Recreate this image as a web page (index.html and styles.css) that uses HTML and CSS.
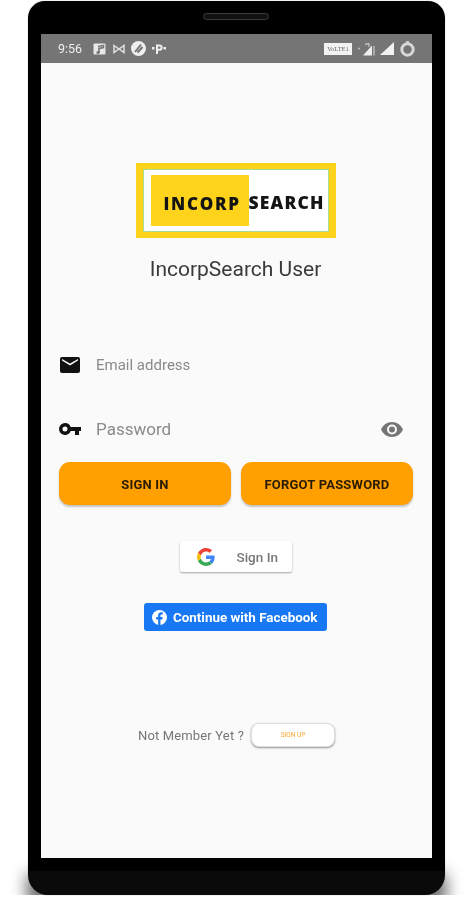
FILE: index.html
```html
<!DOCTYPE html>
<html lang="en">
<head>
<meta charset="utf-8">
<title>IncorpSearch User</title>
<link rel="stylesheet" href="styles.css">
</head>
<body>
<div class="device">
  <div class="drop-shadow"></div>
  <div class="phone">
    <div class="speaker"></div>
    <div class="screen">
      <div class="statusbar">
        <div class="status-left">
          <span class="time">9:56</span>
          <svg class="st-music" width="13" height="12" viewBox="0 0 13 12"><rect x="0.500" y="0.500" width="12" height="11" rx="1" fill="#e8e8e8"/><path d="M6 10V5.500L10.500 4.500V2.500L5 3.500" fill="none" stroke="#757575" stroke-width="1.600"/><circle cx="5" cy="9.500" r="1.600" fill="#757575"/></svg>
          <svg class="st-mail" width="12" height="10" viewBox="0 0 12 10"><path d="M1 1.500L6 5L11 1.500V8.500L6 5L1 8.500Z" fill="none" stroke="#e0e0e0" stroke-width="1.500"/></svg>
          <svg class="st-circle" width="15" height="15" viewBox="0 0 15 15"><circle cx="7.500" cy="7.500" r="7.500" fill="#eee"/><path d="M4 11L10 3.500M6.500 11.500L11.500 6" stroke="#757575" stroke-width="2"/></svg>
          <svg class="st-p" width="14" height="10" viewBox="0 0 14 10"><rect x="0" y="3" width="2.500" height="2.500" fill="#eee"/><rect x="11.500" y="3" width="2.500" height="2.500" fill="#eee"/><path d="M5 10V1.500H7.500A2 2 0 0 1 7.500 5.800H5" fill="none" stroke="#eee" stroke-width="2"/></svg>
        </div>
        <div class="status-right">
          <span class="volte">VoLTE1</span>
          <svg class="st-sim" width="19" height="14" viewBox="0 0 19 14"><path d="M5 13.500L14 3.500V13.500Z" fill="#eee"/><path d="M16 4V13.500M7 2.500L11 1.500M11 1V5M0 6.500H2" stroke="#bbb" stroke-width="1.500" fill="none"/></svg>
          <svg class="st-signal" width="14" height="13" viewBox="0 0 14 13"><path d="M0 13L14 0V13Z" fill="#f2f2f2"/></svg>
          <svg class="st-battery" width="15" height="16" viewBox="0 0 15 16"><circle cx="7.500" cy="8.500" r="5.700" fill="none" stroke="#d8d8d8" stroke-width="3"/><rect x="6" y="0" width="3" height="2" fill="#ccc"/></svg>
        </div>
      </div>
      <main class="content">
        <div class="logo">
          <div class="logo-inner">
            <div class="logo-block"><span class="logo-word1">INCORP</span></div>
            <span class="logo-word2">SEARCH</span>
          </div>
        </div>
        <h1 class="app-title">IncorpSearch User</h1>
        <div class="field field-email">
          <svg class="field-icon" width="20" height="16" viewBox="0 0 20 16"><path d="M2 0H18A2 2 0 0 1 20 2V14A2 2 0 0 1 18 16H2A2 2 0 0 1 0 14V2A2 2 0 0 1 2 0ZM2 3.500L10 8.500L18 3.500L18 2L10 6.500L2 2Z" fill="#111" fill-rule="evenodd"/></svg>
          <span class="placeholder">Email address</span>
        </div>
        <div class="field field-pass">
          <svg class="field-icon" width="22" height="12" viewBox="0 0 22 12"><path d="M6 0A6 6 0 0 1 11.700 4H22V8H20V12H16V8H11.700A6 6 0 1 1 6 0ZM6 3.500A2.500 2.500 0 1 0 6 8.500A2.500 2.500 0 1 0 6 3.500Z" fill="#111" fill-rule="evenodd"/></svg>
          <span class="placeholder placeholder-lg">Password</span>
          <svg class="eye" width="22" height="15" viewBox="0 0 22 15"><path d="M11 0C16 0 20 3 22 7.500C20 12 16 15 11 15C6 15 2 12 0 7.500C2 3 6 0 11 0ZM11 2.500A5 5 0 1 0 11 12.500A5 5 0 1 0 11 2.500ZM11 4.500A3 3 0 1 1 11 10.500A3 3 0 1 1 11 4.500Z" fill="#757575" fill-rule="evenodd"/></svg>
        </div>
        <div class="actions">
          <button class="btn-primary">SIGN IN</button>
          <button class="btn-primary">FORGOT PASSWORD</button>
        </div>
        <button class="btn-google">
          <svg width="18" height="18" viewBox="0 0 48 48"><path fill="#EA4335" d="M24 9.500c3.500 0 6.700 1.200 9.200 3.600l6.900-6.900C35.900 2.400 30.500 0 24 0 14.600 0 6.500 5.400 2.600 13.200l8 6.200C12.500 13.600 17.800 9.500 24 9.500z"/><path fill="#4285F4" d="M47 24.500c0-1.600-.2-3.100-.4-4.500H24v9h12.900c-.6 3-2.200 5.500-4.700 7.200l7.700 6c4.500-4.200 7.100-10.300 7.100-17.700z"/><path fill="#FBBC05" d="M10.500 28.600c-.5-1.400-.8-3-.8-4.600s.3-3.200.8-4.600l-8-6.200C.9 16.500 0 20.100 0 24s.9 7.500 2.600 10.800l7.900-6.200z"/><path fill="#34A853" d="M24 48c6.500 0 11.900-2.100 15.900-5.800l-7.700-6c-2.100 1.400-4.900 2.300-8.200 2.300-6.200 0-11.500-4.200-13.400-9.900l-8 6.200C6.500 42.600 14.600 48 24 48z"/></svg>
          <span>Sign In</span>
        </button>
        <button class="btn-facebook">
          <svg width="15" height="15" viewBox="0 0 16 16"><circle cx="8" cy="8" r="8" fill="#fff"/><path d="M9 16V10H11L11.400 7.500H9V6C9 5.200 9.400 4.700 10.300 4.700H11.500V2.600C11 2.500 10.400 2.400 9.800 2.400C7.900 2.400 6.600 3.600 6.600 5.700V7.500H4.500V10H6.600V16Z" fill="#1877f2"/></svg>
          <span>Continue with Facebook</span>
        </button>
        <div class="signup-row">
          <span class="signup-text">Not Member Yet ?</span>
          <button class="btn-signup">SIGN UP</button>
        </div>
      </main>
    </div>
  </div>
</div>
</body>
</html>
```

FILE: styles.css
```css
* { box-sizing: border-box; }
html, body { margin: 0; padding: 0; }
body {
  width: 471px;
  height: 900px;
  background: #fff;
  overflow: hidden;
  font-family: Roboto, "Liberation Sans", sans-serif;
}
button { font-family: inherit; border: 0; padding: 0; }
.device {
  position: relative;
  width: 417px;
  height: 895px;
  margin-left: 28px;
  padding-top: 1px;
}
.drop-shadow {
  position: absolute;
  left: -1px;
  right: -1px;
  top: 874px;
  height: 30px;
  background: rgba(0,0,0,.6);
  filter: blur(8px);
  clip-path: inset(-30px -30px 9px -30px);
}
.phone {
  width: 417px;
  height: 894px;
  padding: 33px 13px 0;
  background: linear-gradient(#000 870px, #0a0a0a 870px);
  border-radius: 17px 17px 20px 20px;
  box-shadow: 0 0 1px #777;
  position: relative;
  filter: blur(.45px);
}
.speaker {
  position: absolute;
  left: 175px;
  top: 12px;
  width: 66px;
  height: 7px;
  border-radius: 4px;
  background: #111;
  border: 1px solid #3c3c3c;
}
.screen {
  width: 391px;
  height: 824px;
  background: #fafafa;
  display: flex;
  flex-direction: column;
}
.statusbar {
  height: 29px;
  background: #757575;
  display: flex;
  justify-content: space-between;
  align-items: center;
  padding: 0 17px;
  color: #eee;
}
.status-left, .status-right { display: flex; align-items: center; }
.time { font-size: 12.500px; width: 35px; }
.st-mail { margin-left: 7px; }
.st-circle { margin-left: 6px; }
.st-p { margin-left: 6px; }
.volte {
  background: #f2f2f2;
  color: #666;
  font: 6.500px "Liberation Serif", serif;
  width: 28px;
  height: 12px;
  line-height: 12px;
  text-align: center;
}
.st-sim { margin-left: 6px; }
.st-signal { margin-left: 3px; }
.st-battery { margin-left: 6px; }
.content {
  flex: 1;
  display: flex;
  flex-direction: column;
  align-items: center;
  padding: 100px 2px 0 0;
}
.logo {
  width: 200px;
  height: 75px;
  background: #fdd31c;
  padding: 6px 7px;
}
.logo-inner {
  height: 63px;
  background: #fff;
  border: 1px solid #a6dc95;
  display: flex;
  align-items: center;
  padding-left: 7px;
}
.logo-block {
  width: 98px;
  height: 51px;
  background: #fdd31c;
  display: flex;
  align-items: center;
  padding: 5px 0 0 13px;
  white-space: nowrap;
}
.logo-word1, .logo-word2 {
  font-family: "Open Sans", "Liberation Sans", sans-serif;
  font-weight: 800;
  color: #141414;
  line-height: 1;
}
.logo-word1 { font-size: 17px; letter-spacing: 1.700px; }
.logo-word2 { font-size: 17.500px; letter-spacing: 1.200px; padding-top: 5px; }
.app-title {
  margin: 18px 0 0;
  font-size: 21px;
  font-weight: 400;
  line-height: 26px;
  color: #3a3a3a;
}
.field {
  align-self: stretch;
  display: flex;
  align-items: center;
  height: 24px;
  padding-left: 18px;
}
.field-email { margin-top: 71px; }
.field-pass { margin-top: 40px; }
.field-icon { flex: none; }
.field-email .field-icon { margin-left: 1px; }
.field-email .placeholder { margin-left: 16px; }
.field-pass .placeholder { margin-left: 15px; }
.placeholder { font-size: 15px; color: #8a8a8a; }
.placeholder-lg { font-size: 17px; }
.eye { margin-left: auto; margin-right: 27px; }
.actions {
  align-self: stretch;
  display: flex;
  gap: 10px;
  padding: 0 17px 0 18px;
  margin-top: 21px;
}
.btn-primary {
  flex: 1;
  height: 43px;
  padding-top: 2px;
  border-radius: 11px;
  background: #ff9f00;
  color: #2a1c00;
  font-size: 13px;
  font-weight: 700;
  letter-spacing: .2px;
  box-shadow: 0 2px 2px rgba(0,0,0,.22);
}
.btn-google {
  margin-top: 36px;
  width: 112px;
  height: 31px;
  background: #fff;
  border-radius: 2px;
  box-shadow: 0 1px 2px rgba(0,0,0,.35);
  display: flex;
  align-items: center;
  padding-left: 17px;
  gap: 22px;
  color: #777;
  font-size: 13.500px;
  font-weight: 500;
}
.btn-facebook {
  margin-top: 31px;
  width: 183px;
  height: 28px;
  background: #1877f2;
  border-radius: 3px;
  color: #fff;
  display: flex;
  align-items: center;
  padding-left: 8px;
  gap: 6px;
  font-size: 13.400px;
  font-weight: 700;
}
.signup-row {
  margin-top: 92px;
  display: flex;
  align-items: center;
  gap: 7px;
  margin-left: 2px;
}
.signup-text { font-size: 13px; color: #777; letter-spacing: .15px; }
.btn-signup {
  width: 84px;
  height: 24px;
  border-radius: 8px;
  border: 1px solid #ddd;
  background: #fff;
  color: #f7a733;
  font-size: 6.500px;
  box-shadow: 0 1px 2px rgba(0,0,0,.4);
}
```
